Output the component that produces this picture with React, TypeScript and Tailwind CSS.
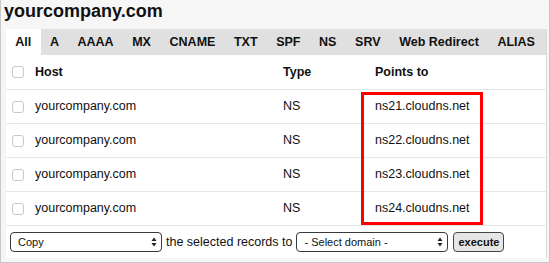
import React from "react";

const tabs = ["All", "A", "AAAA", "MX", "CNAME", "TXT", "SPF", "NS", "SRV", "Web Redirect", "ALIAS"];
const rows = ["ns21.cloudns.net", "ns22.cloudns.net", "ns23.cloudns.net", "ns24.cloudns.net"];

function Box() {
  return <div className="w-[12px] h-[12px] rounded-[3px] border border-[#c8c8c8] bg-white shrink-0" />;
}

function Arrows() {
  return (
    <svg width="6" height="10" viewBox="0 0 6 10" className="shrink-0">
      <path d="M3 0.5 L5.5 4 L0.5 4 Z" fill="#222" />
      <path d="M3 9.5 L5.5 6 L0.5 6 Z" fill="#222" />
    </svg>
  );
}

export default function App() {
  return (
    <div
      className="w-[550px] h-[263px] bg-[#f6f6f6] border-x border-b border-[#c8c8c8] flex flex-col text-[#111]"
      style={{ fontFamily: '"Liberation Sans", Arial, sans-serif' }}
    >
      <div className="h-[22px] leading-[22px] text-[18px] font-bold pl-[3px] text-[#111]">yourcompany.com</div>
      <div className="mt-[7px] ml-[5px] mr-[2px] bg-white border-r border-[#dcdcdc] flex flex-col relative">
        <div className="h-[26px] bg-[#e0e0e0] flex items-stretch">
          {tabs.map((t, i) => (
            <div
              key={t}
              className={
                "flex items-center text-[12.5px] font-bold px-[9.3px] " + (i === 0 ? "bg-white" : "")
              }
            >
              {t}
            </div>
          ))}
        </div>
        <div className="h-[35px] flex items-center border-b border-[#e6e6e6] text-[12.5px] font-bold">
          <div className="w-[29px] pl-[6px] flex"><Box /></div>
          <div className="w-[248px]">Host</div>
          <div className="w-[92px]">Type</div>
          <div>Points to</div>
        </div>
        {rows.map((r) => (
          <div key={r} className="h-[34px] flex items-center border-b border-[#e6e6e6] text-[12.5px]">
            <div className="w-[29px] pl-[6px] flex"><Box /></div>
            <div className="w-[248px]">yourcompany.com</div>
            <div className="w-[92px]">NS</div>
            <div>{r}</div>
          </div>
        ))}
        <div className="h-[32px] flex items-center text-[12.5px] pl-[4px]">
          <div className="w-[152px] h-[20px] border border-[#3a3a3a] rounded-[4px] bg-white flex items-center justify-between pl-[7px] pr-[4px] text-[11px]">
            <span>Copy</span>
            <Arrows />
          </div>
          <span className="ml-[4px]">the selected records to</span>
          <div className="ml-[4px] w-[152px] h-[20px] border border-[#3a3a3a] rounded-[4px] bg-white flex items-center justify-between pl-[7px] pr-[4px] text-[11px]">
            <span>- Select domain -</span>
            <Arrows />
          </div>
          <div className="ml-[5px] w-[51px] h-[20px] border border-[#444] rounded-[4px] bg-[#e6e6e6] flex items-center justify-center text-[11px] font-bold">
            execute
          </div>
        </div>
        <div className="absolute left-[355px] top-[63px] w-[122px] h-[133px] border-[3px] border-[#ff0000]" />
      </div>
    </div>
  );
}
